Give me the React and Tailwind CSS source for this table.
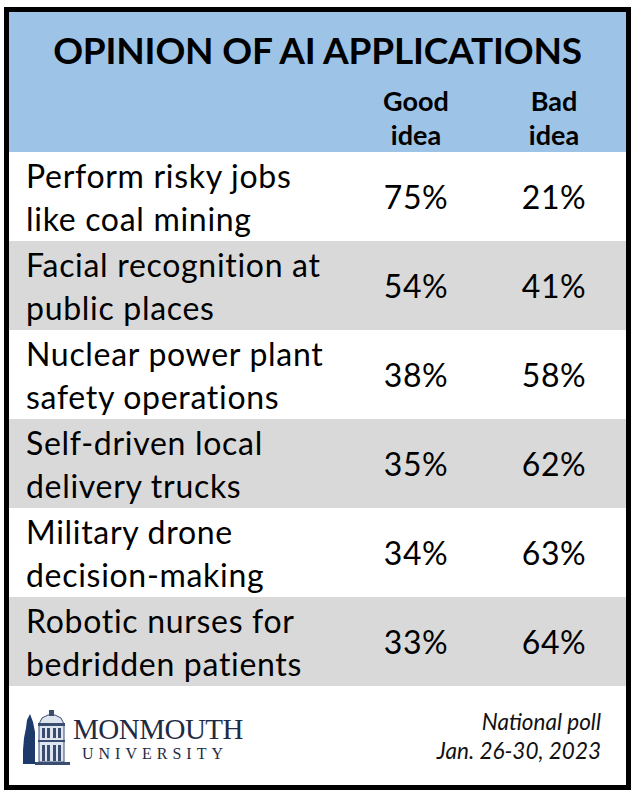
import React from "react";

const rows = [
  ["Perform risky jobs", "like coal mining", "75%", "21%"],
  ["Facial recognition at", "public places", "54%", "41%"],
  ["Nuclear power plant", "safety operations", "38%", "58%"],
  ["Self-driven local", "delivery trucks", "35%", "62%"],
  ["Military drone", "decision-making", "34%", "63%"],
  ["Robotic nurses for", "bedridden patients", "33%", "64%"],
];

function Building() {
  return (
    <svg width="48" height="56" viewBox="0 0 48 56">
      {/* tree */}
      <path d="M8 4 L5 10 L4 18 L2 28 L1 40 L1 54 L13 54 L13 22 L11 12 Z" fill="#1e3a6a" />
      {/* tower */}
      <path d="M17 14 L20 8 L26 5 L33 5 L39 8 L42 14 L42 52 L17 52 Z" fill="#dfe5ee" stroke="#3a4d70" strokeWidth="1" />
      <rect x="27" y="0" width="5" height="6" fill="#3a4d70" />
      <rect x="16" y="13" width="27" height="3" fill="#3a4d70" />
      <rect x="16" y="30" width="27" height="2" fill="#3a4d70" />
      <rect x="20" y="18" width="3" height="10" fill="#3a4d70" />
      <rect x="25" y="18" width="3" height="10" fill="#3a4d70" />
      <rect x="31" y="18" width="3" height="10" fill="#3a4d70" />
      <rect x="36" y="18" width="3" height="10" fill="#3a4d70" />
      <rect x="20" y="35" width="3" height="16" fill="#3a4d70" />
      <rect x="25" y="35" width="3" height="16" fill="#3a4d70" />
      <rect x="31" y="35" width="3" height="16" fill="#3a4d70" />
      <rect x="36" y="35" width="3" height="16" fill="#3a4d70" />
      <rect x="13" y="52" width="35" height="3" fill="#3a4d70" />
    </svg>
  );
}

export default function App() {
  return (
    <div className="w-[638px] h-[795px] bg-white pt-[7px] pl-[4px]">
      <div
        className="w-[627px] h-[783px] border-[5px] border-black flex flex-col text-black"
        style={{ fontFamily: "Lato, 'Noto Sans', sans-serif" }}
      >
        <div className="bg-[#9dc3e6] h-[140px] flex flex-col">
          <div className="text-center font-bold text-[37px] leading-[44px] pt-[16px] tracking-[-0.2px]">
            OPINION OF AI APPLICATIONS
          </div>
          <div className="grid grid-cols-[341px_132px_1fr] font-bold text-[27px] leading-[34px] mt-[12px]">
            <div />
            <div className="text-center">Good<br />idea</div>
            <div className="text-center">Bad<br />idea</div>
          </div>
        </div>
        {rows.map((r, i) => (
          <div
            key={i}
            className={`grid grid-cols-[341px_132px_1fr] h-[89px] items-center ${i % 2 === 1 ? "bg-[#d9d9d9]" : "bg-white"}`}
          >
            <div className="pl-[17px] text-[32px] leading-[43px] tracking-[0.7px] whitespace-nowrap">
              {r[0]}
              <br />
              {r[1]}
            </div>
            <div className="text-center text-[32px] tracking-[0.5px]">{r[2]}</div>
            <div className="text-center text-[32px] tracking-[0.5px]">{r[3]}</div>
          </div>
        ))}
        <div className="flex-1 flex items-center justify-between pl-[13px] pr-[25px]">
          <div className="flex items-end gap-[3px] mt-[4px]">
            <Building />
            <div className="flex flex-col text-[#1f2a44] mb-[2px]" style={{ fontFamily: "'Liberation Serif', serif" }}>
              <div className="text-[29px] leading-[30px] tracking-[-0.5px]">MONMOUTH</div>
              <div className="text-[16px] leading-[20px] tracking-[5px] pl-[9px]">UNIVERSITY</div>
            </div>
          </div>
          <div className="text-right italic text-[22.5px] leading-[29px] text-[#111]">
            National poll
            <br />
            Jan. 26-30, 2023
          </div>
        </div>
      </div>
    </div>
  );
}
